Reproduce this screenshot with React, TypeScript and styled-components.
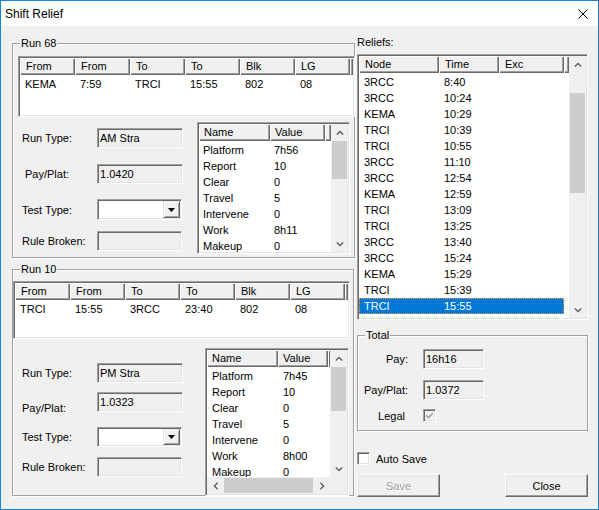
import React from "react";
import styled, { createGlobalStyle, css } from "styled-components";

const GlobalStyle = createGlobalStyle`
  html, body { margin: 0; padding: 0; background: #ffffff; }
  body { font-family: "Liberation Sans", Arial, sans-serif; font-size: 11px; color: #000; }
  *, *::before, *::after { box-sizing: border-box; }
`;

const sunken = css`
  border: 1px solid;
  border-color: #a0a0a0 #ffffff #ffffff #a0a0a0;
  box-shadow: inset 1px 1px 0 #696969, inset -1px -1px 0 #e3e3e3;
  padding: 1px;
`;

const raised = css`
  background: #f0f0f0;
  box-shadow: inset 1px 1px 0 #ffffff, inset -1px -1px 0 #696969, inset -2px -2px 0 #a0a0a0;
`;

const Window = styled.div`
  width: 599px;
  height: 510px;
  border: 1px solid #1883d7;
  background: #f0f0f0;
  display: flex;
  flex-direction: column;
  overflow: hidden;
`;

const TitleBar = styled.div`
  height: 25px;
  flex: none;
  background: #ffffff;
  display: flex;
  align-items: center;
  justify-content: space-between;
  padding: 0 10px 0 4px;
  font-size: 12px;
`;

const CloseGlyph = styled.svg`
  width: 10px;
  height: 10px;
  display: block;
`;

const Body = styled.div`
  flex: 1;
  display: flex;
  gap: 2px;
  padding-left: 11px;
`;

const Column = styled.div<{ $w: number }>`
  width: ${(p) => p.$w}px;
  flex: none;
  display: flex;
  flex-direction: column;
`;

const Group = styled.div<{ $mt: number; $h: number; $w: number }>`
  position: relative;
  flex: none;
  margin-top: ${(p) => p.$mt}px;
  width: ${(p) => p.$w}px;
  height: ${(p) => p.$h}px;
  border: 1px solid #a0a0a0;
  box-shadow: inset 1px 1px 0 #ffffff, 1px 1px 0 #ffffff;
  display: flex;
  flex-direction: column;
`;

const Caption = styled.span`
  position: absolute;
  top: -7px;
  left: 7px;
  padding: 0 1px;
  line-height: 13px;
  background: #f0f0f0;
`;

const PlainLabel = styled.div<{ $mt: number }>`
  margin-top: ${(p) => p.$mt}px;
  line-height: 13px;
`;

/* ---------- list view ---------- */

const ListFrame = styled.div<{ $w?: number; $h: number; $m: string; $vs: boolean; $hs: boolean }>`
  ${sunken}
  background: #ffffff;
  flex: none;
  width: ${(p) => (p.$w ? `${p.$w}px` : "auto")};
  height: ${(p) => p.$h}px;
  margin: ${(p) => p.$m};
  display: grid;
  grid-template-columns: minmax(0, 1fr) ${(p) => (p.$vs ? "17px" : "")};
  grid-template-rows: minmax(0, 1fr) ${(p) => (p.$hs ? "17px" : "")};
  overflow: hidden;
`;

const ListMain = styled.div`
  display: flex;
  flex-direction: column;
  min-width: 0;
  min-height: 0;
  overflow: hidden;
`;

const HeaderRow = styled.div`
  display: flex;
  height: 17px;
  flex: none;
`;

const HeaderCell = styled.div<{ $w: number; $pad: number }>`
  ${raised}
  width: ${(p) => p.$w}px;
  flex: none;
  padding-left: ${(p) => p.$pad}px;
  line-height: 16px;
  white-space: nowrap;
  overflow: hidden;
`;

const HeaderFill = styled.div`
  ${raised}
  flex: 1;
  min-width: 0;
`;

const RowsBody = styled.div`
  flex: 1;
  padding-top: 1px;
  overflow: hidden;
`;

const Row = styled.div<{ $w: number; $sel: boolean }>`
  display: flex;
  width: ${(p) => p.$w}px;
  height: 16px;
  background: ${(p) => (p.$sel ? "#0078d7" : "transparent")};
  color: ${(p) => (p.$sel ? "#ffffff" : "#000000")};
  outline: ${(p) => (p.$sel ? "1px dotted #ff9a3c" : "none")};
  outline-offset: -1px;
`;

const Cell = styled.div<{ $w: number; $pad: number }>`
  width: ${(p) => p.$w}px;
  flex: none;
  padding-left: ${(p) => p.$pad}px;
  line-height: 16px;
  white-space: nowrap;
  overflow: hidden;
`;

const VScroll = styled.div`
  display: flex;
  flex-direction: column;
  background: #f0f0f0;
  min-height: 0;
`;

const HScroll = styled.div`
  display: flex;
  background: #f0f0f0;
  min-width: 0;
`;

const Corner = styled.div`
  background: #f0f0f0;
`;

const ScrollBtn = styled.div`
  width: 17px;
  height: 17px;
  flex: none;
  display: flex;
  align-items: center;
  justify-content: center;
`;

const Track = styled.div`
  flex: 1;
  min-height: 0;
  min-width: 0;
  display: flex;
`;

const VThumb = styled.div<{ $top: number; $h: number }>`
  margin: ${(p) => p.$top}px 1px 0 1px;
  height: ${(p) => p.$h}px;
  flex: 1;
  background: #cdcdcd;
`;

const HThumb = styled.div`
  flex: 1;
  margin: 1px 0;
  background: #cdcdcd;
`;

const ChevronSvg = styled.svg<{ $rot: number }>`
  width: 8px;
  height: 8px;
  display: block;
  transform: rotate(${(p) => p.$rot}deg);
`;

function Chevron({ rot }: { rot: number }) {
  return (
    <ChevronSvg $rot={rot} viewBox="0 0 8 8">
      <polyline points="0.8,5.6 4,2.4 7.2,5.6" fill="none" stroke="#606060" strokeWidth="1.4" />
    </ChevronSvg>
  );
}

type ListViewProps = {
  cols: number[];
  headers: string[];
  rows: string[][];
  headPad: number;
  cellPad: number;
  selected?: number;
  vThumb?: [number, number];
  hScroll?: boolean;
  w?: number;
  h: number;
  m: string;
};

function ListView(p: ListViewProps) {
  const total = p.cols.reduce((a, b) => a + b, 0);
  return (
    <ListFrame $w={p.w} $h={p.h} $m={p.m} $vs={!!p.vThumb} $hs={!!p.hScroll}>
      <ListMain>
        <HeaderRow>
          {p.headers.map((h, i) => (
            <HeaderCell key={i} $w={p.cols[i]} $pad={p.headPad}>
              {h}
            </HeaderCell>
          ))}
          <HeaderFill />
        </HeaderRow>
        <RowsBody>
          {p.rows.map((r, ri) => (
            <Row key={ri} $w={total} $sel={ri === p.selected}>
              {r.map((c, ci) => (
                <Cell key={ci} $w={p.cols[ci]} $pad={p.cellPad}>
                  {c}
                </Cell>
              ))}
            </Row>
          ))}
        </RowsBody>
      </ListMain>
      {p.vThumb && (
        <VScroll>
          <ScrollBtn>
            <Chevron rot={0} />
          </ScrollBtn>
          <Track>
            <VThumb $top={p.vThumb[0]} $h={p.vThumb[1]} />
          </Track>
          <ScrollBtn>
            <Chevron rot={180} />
          </ScrollBtn>
        </VScroll>
      )}
      {p.hScroll && (
        <>
          <HScroll>
            <ScrollBtn>
              <Chevron rot={270} />
            </ScrollBtn>
            <Track>
              <HThumb />
            </Track>
            <ScrollBtn>
              <Chevron rot={90} />
            </ScrollBtn>
          </HScroll>
          <Corner />
        </>
      )}
    </ListFrame>
  );
}

/* ---------- fields ---------- */

const LowerRow = styled.div`
  display: flex;
  align-items: flex-start;
`;

const FieldsCol = styled.div<{ $w: number }>`
  width: ${(p) => p.$w}px;
  flex: none;
  display: flex;
  flex-direction: column;
`;

const FieldRow = styled.div<{ $mt: number; $h: number }>`
  display: flex;
  align-items: center;
  margin-top: ${(p) => p.$mt}px;
  height: ${(p) => p.$h}px;
`;

const FieldLabel = styled.span<{ $indent?: number; $drop?: number }>`
  width: 84px;
  flex: none;
  padding-left: ${(p) => 9 + (p.$indent ?? 0)}px;
  padding-top: ${(p) => p.$drop ?? 0}px;
  white-space: nowrap;
`;

const TextBox = styled.div<{ $w: number }>`
  ${sunken}
  width: ${(p) => p.$w}px;
  height: 20px;
  padding: 0 2px;
  background: #f0f0f0;
  line-height: 18px;
  white-space: nowrap;
`;

const Combo = styled.div<{ $w: number; $h: number }>`
  ${sunken}
  width: ${(p) => p.$w}px;
  height: ${(p) => p.$h}px;
  background: #ffffff;
  display: flex;
  justify-content: flex-end;
`;

const ComboButton = styled.div`
  width: 17px;
  height: 100%;
  border: 1px solid;
  border-color: #e3e3e3 #696969 #696969 #e3e3e3;
  box-shadow: inset 1px 1px 0 #ffffff, inset -1px -1px 0 #a0a0a0;
  background: #f0f0f0;
  display: flex;
  align-items: center;
  justify-content: center;
`;

function ComboBox({ w, h }: { w: number; h: number }) {
  return (
    <Combo $w={w} $h={h}>
      <ComboButton>
        <svg width="7" height="4" viewBox="0 0 7 4">
          <polygon points="0,0 7,0 3.5,4" fill="#000" />
        </svg>
      </ComboButton>
    </Combo>
  );
}

const TotalRow = styled.div<{ $mt: number; $h: number }>`
  display: flex;
  align-items: center;
  gap: 15px;
  margin-top: ${(p) => p.$mt}px;
  height: ${(p) => p.$h}px;
`;

const TotalLabel = styled.span<{ $pr?: number }>`
  width: 50px;
  flex: none;
  text-align: right;
  padding-right: ${(p) => p.$pr ?? 0}px;
  white-space: nowrap;
`;

const CheckBox = styled.span<{ $disabled?: boolean }>`
  width: 13px;
  height: 13px;
  flex: none;
  border: 1px solid;
  border-color: #a0a0a0 #ffffff #ffffff #a0a0a0;
  box-shadow: inset 1px 1px 0 #696969, inset -1px -1px 0 #e3e3e3;
  background: ${(p) => (p.$disabled ? "#f0f0f0" : "#ffffff")};
  display: flex;
  align-items: center;
  justify-content: center;
`;

const CheckRow = styled.label`
  display: flex;
  align-items: center;
  gap: 6px;
  margin-top: 21px;
  height: 13px;
`;

const ButtonRow = styled.div`
  display: flex;
  justify-content: space-between;
  margin-top: 9px;
`;

const PushButton = styled.button<{ $disabled?: boolean }>`
  width: 83px;
  height: 23px;
  padding: 0;
  font-family: inherit;
  font-size: 11px;
  background: #f0f0f0;
  border: 1px solid;
  border-color: #ffffff #696969 #696969 #ffffff;
  box-shadow: inset -1px -1px 0 #a0a0a0, inset 1px 1px 0 #e3e3e3;
  color: ${(p) => (p.$disabled ? "#a0a0a0" : "#000000")};
  text-shadow: ${(p) => (p.$disabled ? "1px 1px 0 #ffffff" : "none")};
`;

/* ---------- data ---------- */

const runCols = [55, 55, 55, 55, 55, 55];
const runHeaders = ["From", "From", "To", "To", "Blk", "LG"];

const reliefs: string[][] = [
  ["3RCC", "8:40", ""],
  ["3RCC", "10:24", ""],
  ["KEMA", "10:29", ""],
  ["TRCI", "10:39", ""],
  ["TRCI", "10:55", ""],
  ["3RCC", "11:10", ""],
  ["3RCC", "12:54", ""],
  ["KEMA", "12:59", ""],
  ["TRCI", "13:09", ""],
  ["TRCI", "13:25", ""],
  ["3RCC", "13:40", ""],
  ["3RCC", "15:24", ""],
  ["KEMA", "15:29", ""],
  ["TRCI", "15:39", ""],
  ["TRCI", "15:55", ""],
  ["3RCC", "16:10", ""],
];

function values(platform: string, work: string): string[][] {
  return [
    ["Platform", platform],
    ["Report", "10"],
    ["Clear", "0"],
    ["Travel", "5"],
    ["Intervene", "0"],
    ["Work", work],
    ["Makeup", "0"],
  ];
}

export default function App() {
  return (
    <>
      <GlobalStyle />
      <Window>
        <TitleBar>
          <span>Shift Relief</span>
          <CloseGlyph viewBox="0 0 10 10">
            <path d="M0.5 0.5 L9.5 9.5 M9.5 0.5 L0.5 9.5" stroke="#000" strokeWidth="1" fill="none" />
          </CloseGlyph>
        </TitleBar>
        <Body>
          <Column $w={343}>
            <Group $mt={17} $h={215} $w={343}>
              <Caption>Run 68</Caption>
              <ListView
                cols={runCols}
                headers={runHeaders}
                rows={[["KEMA", "7:59", "TRCI", "15:55", "802", "08"]]}
                headPad={6}
                cellPad={5}
                h={61}
                m="12px -1px 0 5px"
              />
              <LowerRow>
                <FieldsCol $w={184}>
                  <FieldRow $mt={11} $h={20}>
                    <FieldLabel>Run Type:</FieldLabel>
                    <TextBox $w={86}>AM Stra</TextBox>
                  </FieldRow>
                  <FieldRow $mt={16} $h={20}>
                    <FieldLabel $indent={3}>Pay/Plat:</FieldLabel>
                    <TextBox $w={86}>1.0420</TextBox>
                  </FieldRow>
                  <FieldRow $mt={15} $h={21}>
                    <FieldLabel>Test Type:</FieldLabel>
                    <ComboBox w={85} h={21} />
                  </FieldRow>
                  <FieldRow $mt={11} $h={20}>
                    <FieldLabel>Rule Broken:</FieldLabel>
                    <TextBox $w={85} />
                  </FieldRow>
                </FieldsCol>
                <ListView
                  cols={[71, 55]}
                  headers={["Name", "Value"]}
                  rows={values("7h56", "8h11")}
                  headPad={5}
                  cellPad={4}
                  vThumb={[0, 38]}
                  w={153}
                  h={132}
                  m="5px 0 0 0"
                />
              </LowerRow>
            </Group>

            <Group $mt={11} $h={227} $w={342}>
              <Caption>Run 10</Caption>
              <ListView
                cols={runCols}
                headers={runHeaders}
                rows={[["TRCI", "15:55", "3RCC", "23:40", "802", "08"]]}
                headPad={6}
                cellPad={5}
                h={58}
                m="11px 3px 0 0"
              />
              <LowerRow>
                <FieldsCol $w={192}>
                  <FieldRow $mt={24} $h={20}>
                    <FieldLabel>Run Type:</FieldLabel>
                    <TextBox $w={86}>PM Stra</TextBox>
                  </FieldRow>
                  <FieldRow $mt={9} $h={20}>
                    <FieldLabel $drop={11}>Pay/Plat:</FieldLabel>
                    <TextBox $w={86}>1.0323</TextBox>
                  </FieldRow>
                  <FieldRow $mt={15} $h={20}>
                    <FieldLabel>Test Type:</FieldLabel>
                    <ComboBox w={85} h={20} />
                  </FieldRow>
                  <FieldRow $mt={10} $h={20}>
                    <FieldLabel>Rule Broken:</FieldLabel>
                    <TextBox $w={85} />
                  </FieldRow>
                </FieldsCol>
                <ListView
                  cols={[71, 50]}
                  headers={["Name", "Value"]}
                  rows={values("7h45", "8h00")}
                  headPad={5}
                  cellPad={5}
                  vThumb={[0, 44]}
                  hScroll
                  w={144}
                  h={148}
                  m="9px 0 0 0"
                />
              </LowerRow>
            </Group>
          </Column>

          <Column $w={231}>
            <PlainLabel $mt={10}>Reliefs:</PlainLabel>
            <ListView
              cols={[80, 60, 65]}
              headers={["Node", "Time", "Exc"]}
              rows={reliefs}
              headPad={6}
              cellPad={5}
              selected={14}
              vThumb={[20, 100]}
              h={266}
              m="5px 0 0 0"
            />
            <Group $mt={15} $h={96} $w={231}>
              <Caption>Total</Caption>
              <TotalRow $mt={13} $h={20}>
                <TotalLabel>Pay:</TotalLabel>
                <TextBox $w={61}>16h16</TextBox>
              </TotalRow>
              <TotalRow $mt={11} $h={20}>
                <TotalLabel>Pay/Plat:</TotalLabel>
                <TextBox $w={61}>1.0372</TextBox>
              </TotalRow>
              <TotalRow $mt={9} $h={13}>
                <TotalLabel $pr={3}>Legal</TotalLabel>
                <CheckBox $disabled>
                  <svg width="9" height="9" viewBox="0 0 9 9">
                    <polyline points="1.2,4.4 3.4,6.6 7.8,2.2" fill="none" stroke="#a0a0a0" strokeWidth="1.6" />
                  </svg>
                </CheckBox>
              </TotalRow>
            </Group>
            <CheckRow>
              <CheckBox />
              <span>Auto Save</span>
            </CheckRow>
            <ButtonRow>
              <PushButton $disabled disabled>
                Save
              </PushButton>
              <PushButton>Close</PushButton>
            </ButtonRow>
          </Column>
        </Body>
      </Window>
    </>
  );
}
